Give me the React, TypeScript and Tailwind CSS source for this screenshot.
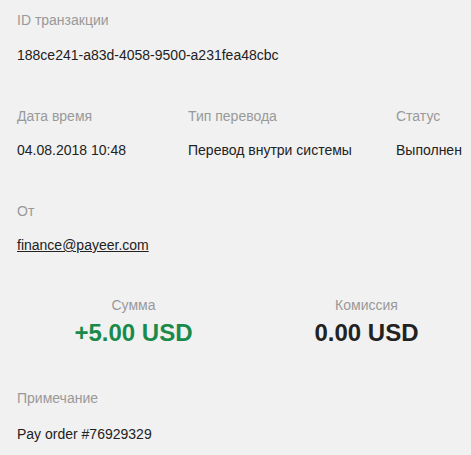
const font = { fontFamily: '"Liberation Sans", Arial, sans-serif' };

function Label({ children }: { children: React.ReactNode }) {
  return <div className="text-[14px] leading-5 text-[#999999]">{children}</div>;
}

function Value({ children }: { children: React.ReactNode }) {
  return <div className="text-[14px] leading-5 text-[#222222]">{children}</div>;
}

export default function App() {
  return (
    <div className="min-h-[455px] w-[471px] overflow-hidden bg-[#f1f1f1] pl-[17px] pt-[10px]" style={font}>
      <div className="space-y-[15px]">
        <Label>ID транзакции</Label>
        <Value>188ce241-a83d-4058-9500-a231fea48cbc</Value>
      </div>

      <div className="mt-[41px] flex">
        <div className="w-[171px] shrink-0 space-y-[14px]">
          <Label>Дата время</Label>
          <Value>04.08.2018 10:48</Value>
        </div>
        <div className="w-[208px] shrink-0 space-y-[14px]">
          <Label>Тип перевода</Label>
          <Value>Перевод внутри системы</Value>
        </div>
        <div className="shrink-0 space-y-[14px]">
          <Label>Статус</Label>
          <Value>Выполнен</Value>
        </div>
      </div>

      <div className="mt-[41px] space-y-[14px]">
        <Label>От</Label>
        <Value>
          <a href="#" className="underline">finance@payeer.com</a>
        </Value>
      </div>

      <div className="mt-[40px] flex w-[466px]">
        <div className="flex-1 text-center">
          <Label>Сумма</Label>
          <div className="mt-[4px] text-[24px] font-bold leading-7 text-[#1a8a4a]">+5.00 USD</div>
        </div>
        <div className="flex-1 text-center">
          <Label>Комиссия</Label>
          <div className="mt-[4px] text-[24px] font-bold leading-7 text-[#222222]">0.00 USD</div>
        </div>
      </div>

      <div className="mt-[41px] space-y-[16px]">
        <Label>Примечание</Label>
        <Value>Pay order #76929329</Value>
      </div>
    </div>
  );
}
